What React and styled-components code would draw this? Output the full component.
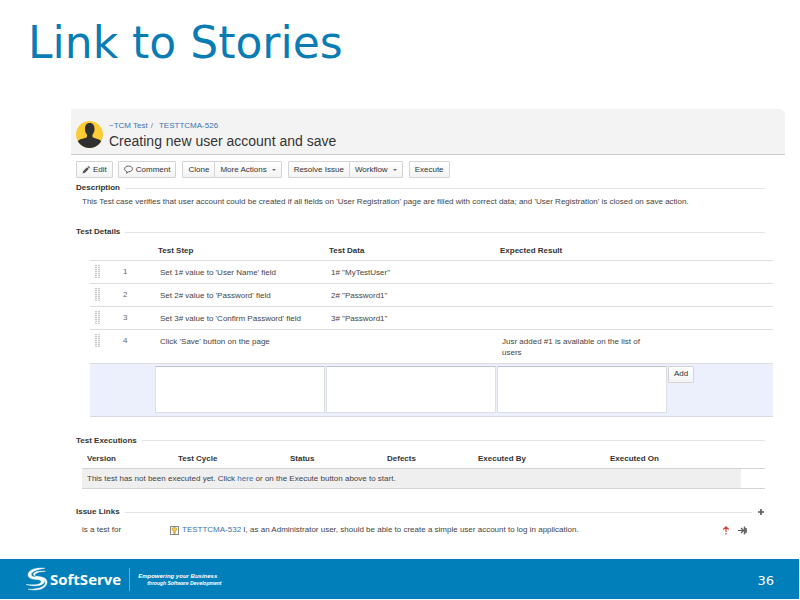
import React from "react";
import styled, { createGlobalStyle } from "styled-components";

const GlobalStyle = createGlobalStyle`
  *, *::before, *::after { box-sizing: border-box; }
  body { margin: 0; background: #fff; }
  button, textarea { font: inherit; color: inherit; }
`;

const Slide = styled.div`
  display: flex;
  flex-direction: column;
  min-height: 100vh;
  padding: 0 1px 1px 0;
  font-family: "Liberation Sans", Arial, sans-serif;
  font-size: 8px;
  line-height: 12px;
  color: #444;
`;

const SlideTitle = styled.h1`
  margin: 0;
  padding: 17px 28px 0;
  font-family: "DejaVu Sans", Verdana, sans-serif;
  font-size: 44px;
  font-weight: 400;
  line-height: 52px;
  color: #0a7cb5;
`;

const Issue = styled.main`
  flex: 1;
  margin: 40px 14px 0 71px;
`;

const IssueHeader = styled.header`
  display: flex;
  align-items: center;
  gap: 6px;
  height: 46px;
  padding: 6px 5px 0;
  background: #f3f3f3;
  border-bottom: 1px solid #ccc;
  border-top-right-radius: 6px;
`;

const Avatar = styled.svg`
  flex: none;
  width: 27px;
  height: 27px;
`;

const Crumbs = styled.nav`
  display: flex;
  gap: 3px;
  line-height: 12px;
  color: #777;
`;

const Link = styled.a`
  color: #3b73af;
  text-decoration: none;
`;

const CrumbKey = styled(Link)`
  margin-left: 3px;
`;

const IssueTitle = styled.h2`
  margin: 0;
  font-size: 14px;
  font-weight: 400;
  line-height: 18px;
  color: #333;
`;

const Toolbar = styled.div`
  display: flex;
  gap: 6px;
  padding: 6px 5px 0;
`;

const ButtonGroup = styled.div`
  display: flex;
`;

const Button = styled.button`
  display: flex;
  align-items: center;
  gap: 3px;
  height: 17px;
  padding: 0 5px;
  border: 1px solid #d4d4d4;
  border-radius: 1px;
  background: linear-gradient(#fff, #f3f3f3);
  font-size: 8px;
  line-height: 12px;
  color: #333;
  white-space: nowrap;

  & + & { margin-left: -1px; }
`;

const Caret = styled.span`
  margin-left: 2px;
  border: 2px solid transparent;
  border-top-color: #666;
  border-bottom: 0;
`;

const Section = styled.section`
  padding: 0 20px 0 5px;
  margin-top: ${(p) => p.$gap}px;
`;

const SectionHeading = styled.div`
  display: flex;
  align-items: center;
  gap: 5px;
  height: 12px;
`;

const SectionTitle = styled.h3`
  margin: 0;
  font-size: 8px;
  line-height: 12px;
  color: #333;
`;

const Rule = styled.span`
  flex: 1;
  height: 1px;
  background: #e4e4e4;
`;

const IconButton = styled.button`
  display: flex;
  padding: 0;
  border: 0;
  background: none;
`;

const Description = styled.p`
  margin: 2px 0 0 6px;
`;

const Table = styled.table`
  width: 100%;
  table-layout: fixed;
  border-collapse: collapse;
  text-align: left;
`;

const StepsFrame = styled.div`
  margin: 2px -8px 0 14px;
`;

const StepHead = styled.th`
  height: 20px;
  padding: 2px 3px 0;
  border-bottom: 1px solid #ddd;
  color: #333;
`;

const StepCell = styled.td`
  padding: 6px 20px 5px 5px;
  border-bottom: 1px solid #ddd;
  line-height: 11px;
  vertical-align: top;
`;

const HandleCell = styled(StepCell)`
  padding: 4px 5px;
`;

const NumberCell = styled(StepCell)`
  padding: 5px 13px;
  color: #666;
`;

const Handle = styled.svg`
  display: block;
  width: 5px;
  height: 13px;
`;

const EntryRow = styled.tr`
  background: #ebf0fc;
  border-top: 1px solid #c3c8d4;
`;

const EntryCell = styled.td`
  height: 53px;
  padding: 2px 1px 3px 0;
  border-bottom: 1px solid #d5dae4;
  vertical-align: top;
`;

const Entry = styled.textarea`
  display: block;
  width: 100%;
  height: 47px;
  padding: 2px;
  border: 1px solid #dcdfe6;
  border-top-color: #c0c4cc;
  background: #fff;
  resize: none;
`;

const RunsFrame = styled.div`
  margin: 2px 0 0 6px;
`;

const RunHead = styled.th`
  height: 20px;
  padding: 2px 5px 0;
  border-bottom: 1px solid #d4d4d4;
  color: #333;
`;

const RunCell = styled.td`
  height: 20px;
  padding: 0 5px;
  border-bottom: 1px solid #d4d4d4;
  background: ${(p) => (p.$filled ? "#efefef" : "transparent")};
`;

const LinkRow = styled.div`
  display: flex;
  align-items: center;
  margin: 6px 17px 0 6px;
`;

const Relation = styled.span`
  width: 88px;
`;

const StoryText = styled.span`
  flex: 1;
  margin-left: 3px;
`;

const RowIcons = styled.span`
  display: flex;
  align-items: center;
  gap: 8px;
`;

const Footer = styled.footer`
  display: flex;
  align-items: center;
  height: 40px;
  padding: 0 25px 0 26px;
  background: #007fba;
  color: #fff;
`;

const LogoMark = styled.svg`
  width: 22px;
  height: 24px;
`;

const Brand = styled.span`
  margin-left: 2px;
  font-family: "Open Sans", sans-serif;
  font-size: 15px;
  font-weight: 700;
  line-height: 20px;
`;

const Tagline = styled.p`
  margin: 0 auto 0 8px;
  padding: 5px 0 5px 8px;
  border-left: 1px solid #5fb0d6;
  font-size: 6px;
  font-style: italic;
  font-weight: 700;
  line-height: 7px;
`;

const TaglineEnd = styled.span`
  display: block;
  padding-left: 9px;
  font-size: 5px;
  line-height: 6px;
`;

const PageNumber = styled.span`
  padding-top: 3px;
  font-family: "DejaVu Sans", Verdana, sans-serif;
  font-size: 13px;
  line-height: 16px;
`;

const steps = [
  ["Set 1# value to 'User Name' field", '1# "MyTestUser"', ""],
  ["Set 2# value to 'Password' field", '2# "Password1"', ""],
  ["Set 3# value to 'Confirm Password' field", '3# "Password1"', ""],
  ["Click 'Save' button on the page", "", "Jusr added #1 is available on the list of users"],
];

const runColumns = [
  ["Version", 91],
  ["Test Cycle", 112],
  ["Status", 97],
  ["Defects", 91],
  ["Executed By", 132],
  ["Executed On", 136],
];

function UserAvatar() {
  return (
    <Avatar viewBox="0 0 27 27" aria-hidden="true">
      <clipPath id="face"><circle cx="13.5" cy="13.5" r="13.5" /></clipPath>
      <g clipPath="url(#face)">
        <rect width="27" height="27" fill="#fccb35" />
        <path d="M9 8C9 3.800 11 2 13.700 2S18.500 3.800 18.500 8C18.500 10.500 17.500 12.500 16.500 13.500V16C18 17.500 23 17.500 25 20V27H2V20C4 17.500 9.500 17.500 11 16V13.500C9.800 12.500 9 10.500 9 8Z" fill="#303030" />
      </g>
    </Avatar>
  );
}

function Pencil() {
  return (
    <svg width="8" height="8" viewBox="0 0 8 8" aria-hidden="true">
      <path d="M.5 7.500 1.200 5 5 1.300 6.800 3.100 3 6.800ZM5.500.8 6.200.2Q7 .1 7.500.8T7.700 2L7.200 2.600Z" fill="#555" />
    </svg>
  );
}

function Bubble() {
  return (
    <svg width="9" height="9" viewBox="0 0 9 9" aria-hidden="true">
      <path d="M4.500 1C2.200 1 .6 2.200.6 3.800S2 6.400 3 6.600L2.500 8.200 4.800 6.700C7 6.600 8.400 5.400 8.400 3.800S6.800 1 4.500 1Z" fill="none" stroke="#555" strokeWidth=".9" />
    </svg>
  );
}

function DragHandle() {
  return (
    <Handle viewBox="0 0 5 13" aria-hidden="true">
      <path d="M1 0V13M4 0V13" stroke="#b8b8b8" strokeWidth="1.500" strokeDasharray="1.200 .8" />
    </Handle>
  );
}

export default function App() {
  return (
    <Slide>
      <GlobalStyle />
      <SlideTitle>Link to Stories</SlideTitle>

      <Issue>
        <IssueHeader>
          <UserAvatar />
          <div>
            <Crumbs>
              <Link href="#project">~TCM Test</Link>
              <span>/</span>
              <CrumbKey href="#issue">TESTTCMA-526</CrumbKey>
            </Crumbs>
            <IssueTitle>Creating new user account and save</IssueTitle>
          </div>
        </IssueHeader>

        <Toolbar>
          <Button><Pencil />Edit</Button>
          <Button><Bubble />Comment</Button>
          <ButtonGroup>
            <Button>Clone</Button>
            <Button>More Actions<Caret /></Button>
          </ButtonGroup>
          <ButtonGroup>
            <Button>Resolve Issue</Button>
            <Button>Workflow<Caret /></Button>
          </ButtonGroup>
          <Button>Execute</Button>
        </Toolbar>

        <Section $gap={4}>
          <SectionHeading><SectionTitle>Description</SectionTitle><Rule /></SectionHeading>
          <Description>
            This Test case verifies that user account could be created if all fields on 'User Registration' page are filled with correct data; and 'User Registration' is closed on save action.
          </Description>
        </Section>

        <Section $gap={18}>
          <SectionHeading><SectionTitle>Test Details</SectionTitle><Rule /></SectionHeading>
          <StepsFrame>
            <Table>
              <colgroup>
                <col width="20" /><col width="45" /><col width="171" /><col width="171" /><col width="171" /><col width="105" />
              </colgroup>
              <thead>
                <tr>
                  <StepHead /><StepHead />
                  <StepHead scope="col">Test Step</StepHead>
                  <StepHead scope="col">Test Data</StepHead>
                  <StepHead scope="col">Expected Result</StepHead>
                  <StepHead />
                </tr>
              </thead>
              <tbody>
                {steps.map(([step, data, result], i) => (
                  <tr key={step}>
                    <HandleCell><DragHandle /></HandleCell>
                    <NumberCell>{i + 1}</NumberCell>
                    <StepCell>{step}</StepCell>
                    <StepCell>{data}</StepCell>
                    <StepCell>{result}</StepCell>
                    <StepCell />
                  </tr>
                ))}
                <EntryRow>
                  <EntryCell /><EntryCell />
                  <EntryCell><Entry aria-label="Test Step" /></EntryCell>
                  <EntryCell><Entry aria-label="Test Data" /></EntryCell>
                  <EntryCell><Entry aria-label="Expected Result" /></EntryCell>
                  <EntryCell><Button>Add</Button></EntryCell>
                </EntryRow>
              </tbody>
            </Table>
          </StepsFrame>
        </Section>

        <Section $gap={18}>
          <SectionHeading><SectionTitle>Test Executions</SectionTitle><Rule /></SectionHeading>
          <RunsFrame>
            <Table>
              <colgroup>
                {runColumns.map(([name, width]) => <col key={name} width={width} />)}
                <col width="24" />
              </colgroup>
              <thead>
                <tr>
                  {runColumns.map(([name]) => <RunHead key={name} scope="col">{name}</RunHead>)}
                  <RunHead />
                </tr>
              </thead>
              <tbody>
                <tr>
                  <RunCell colSpan={6} $filled>
                    This test has not been executed yet. Click <Link href="#execute">here</Link> or on the Execute button above to start.
                  </RunCell>
                  <RunCell />
                </tr>
              </tbody>
            </Table>
          </RunsFrame>
        </Section>

        <Section $gap={17}>
          <SectionHeading>
            <SectionTitle>Issue Links</SectionTitle>
            <Rule />
            <IconButton aria-label="Add link">
              <svg width="8" height="8" viewBox="0 0 8 8"><path d="M4 1V7M1 4H7" stroke="#555" strokeWidth="1.600" /></svg>
            </IconButton>
          </SectionHeading>
          <LinkRow>
            <Relation>is a test for</Relation>
            <svg width="9" height="9" viewBox="0 0 9 9" aria-hidden="true">
              <rect x=".5" y=".5" width="8" height="8" fill="#fff" stroke="#888" />
              <path d="M4.500 1.500C2.500 1.500 1.500 2.500 2.200 3.800L3.700 5.500V7.500H5.300V5.500L6.800 3.800C7.500 2.500 6.500 1.500 4.500 1.500Z" fill="#f4c63a" stroke="#a48a44" strokeWidth=".6" />
            </svg>
            <StoryText>
              <Link href="#story">TESTTCMA-532</Link> I, as an Administrator user, should be able to create a simple user account to log in application.
            </StoryText>
            <RowIcons>
              <svg width="8" height="9" viewBox="0 0 8 9" role="img" aria-label="Major priority">
                <path d="M4 1V6M1.300 3.500 4 .9 6.700 3.500M4 7V8.500" fill="none" stroke="#d04437" strokeWidth="1.200" />
              </svg>
              <IconButton aria-label="Open status">
                <svg width="10" height="9" viewBox="0 0 10 9">
                  <path d="M0 4.500H5M3 2 5.500 4.500 3 7" fill="none" stroke="#555" strokeWidth="1.200" />
                  <path d="M6.500.5V8.500M4.500 4.500H9M8 2V7" stroke="#666" strokeWidth="1.500" />
                </svg>
              </IconButton>
            </RowIcons>
          </LinkRow>
        </Section>
      </Issue>

      <Footer>
        <LogoMark viewBox="0 0 22 24" aria-hidden="true">
          <g fill="#fff" stroke="#fff" strokeWidth=".4">
            <path d="M19 1.200C10 .2 2.500 2.800 2 7.500C1.700 11 6 12.200 10 12.500C14 12.800 15.500 13.500 15 15.200C14.500 17 10 18.500 0 17.500C9 20.200 18 18.500 18.500 14.500C18.800 11.500 15 10.700 11 10.300C7.500 10 5 9.300 5.200 7.300C5.500 4.500 11 2.500 19 1.200Z" />
            <path d="M19.500 4.200C12 3.600 7.500 5.300 7.300 7.300C7.200 9.200 11 9.300 14 9.700C18 10.300 21.700 12 21 16C20 21.500 12 24.500 2 22.200C11 22.500 18.500 20.500 19.300 16C19.800 12.500 16 11 12.500 10.700C9.500 10.400 8.500 9 9 7.500C9.800 5.800 13 4.800 19.500 4.200Z" />
          </g>
        </LogoMark>
        <Brand>SoftServe</Brand>
        <Tagline>
          Empowering your Business
          <TaglineEnd>through Software Development</TaglineEnd>
        </Tagline>
        <PageNumber>36</PageNumber>
      </Footer>
    </Slide>
  );
}
